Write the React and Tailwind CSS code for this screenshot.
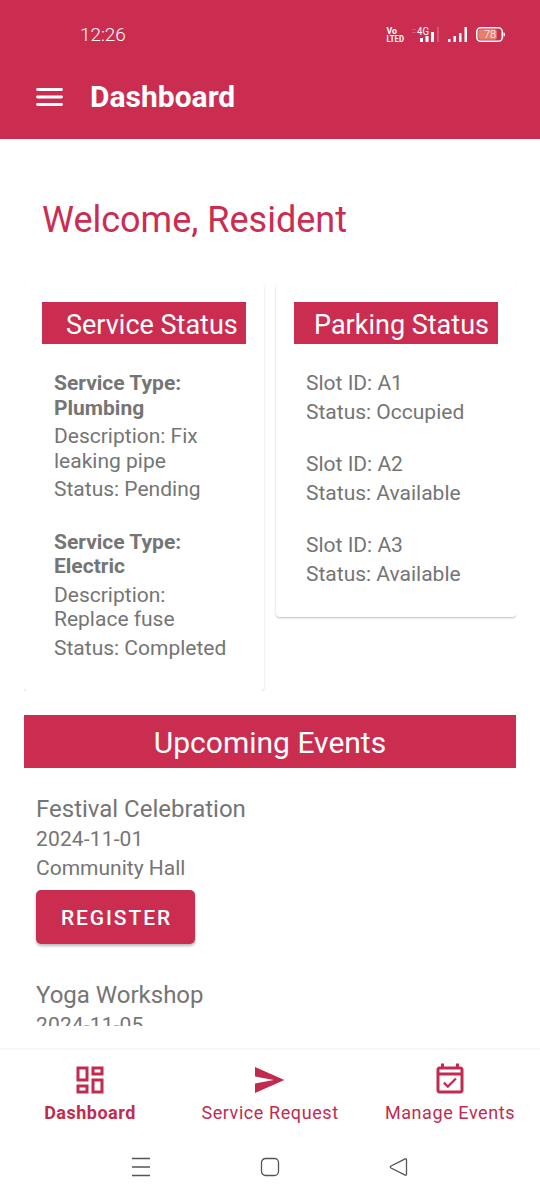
const services = [
  { type: ["Service Type:", "Plumbing"], description: ["Description: Fix", "leaking pipe"], status: "Pending" },
  { type: ["Service Type:", "Electric"], description: ["Description:", "Replace fuse"], status: "Completed" },
];

const slots = [
  { id: "A1", status: "Occupied" },
  { id: "A2", status: "Available" },
  { id: "A3", status: "Available" },
];

function Lines({ lines }) {
  return lines.map((line) => <span key={line} className="block">{line}</span>);
}

function StatusBar() {
  return (
    <div className="flex h-[55px] items-end justify-between pr-[33px] pl-[80px]">
      <span className="h-[34px] text-[19px] leading-[28px] font-light tracking-[-0.1px]">12:26</span>
      <svg width="122" height="30" viewBox="0 0 122 30" className="mb-[5px]" fill="white" fontFamily="Roboto, sans-serif">
        <g fontSize="9.5" fontWeight="700">
          <text x="1.500" y="14" textLength="10.500" lengthAdjust="spacingAndGlyphs">Vo</text>
          <text x="1.500" y="22" textLength="17.500" lengthAdjust="spacingAndGlyphs">LTED</text>
        </g>
        <path d="M27 9h4v1h-4zM27 12h4v1h-4zM52 7h2v15h-2z" opacity="0.2" />
        <text x="32" y="15" fontSize="10.5" textLength="12" lengthAdjust="spacingAndGlyphs">4G</text>
        <path d="M35 18h3v4h-3zM40.500 16h3v6h-3zM46 12h3v10h-3z" />
        <path d="M63 19h2.500v3H63zM68.500 16h2.500v6h-2.500zM74 13h2.500v9H74zM79.500 7h2.500v15h-2.500z" />
        <rect x="91.800" y="7.800" width="25.500" height="13.500" rx="4" fill="none" stroke="white" strokeWidth="1.600" />
        <rect x="93.300" y="9.300" width="18.500" height="10.500" rx="2" fill="#e58065" />
        <path d="M118.500 12.300c2 .5 2 4 0 4.500z" />
        <text x="99" y="18.200" fontSize="11" fontWeight="300">78</text>
      </svg>
    </div>
  );
}

function Card({ title, inset, className, children }) {
  return (
    <section className={"w-[240px] rounded-[4px] bg-white px-[18px] pt-[19px] " + className}>
      <h2 className={"h-[42px] w-[204px] bg-[#cb2d51] text-[27px] leading-[46px] whitespace-nowrap text-white " + inset}>{title}</h2>
      <div className="flex flex-col gap-[28px] pt-[27px] pl-[12px] text-[21px] leading-[24.5px]">{children}</div>
    </section>
  );
}

function EventItem({ title, date, place }) {
  return (
    <article className="flex flex-col text-[21px] leading-[25px]">
      <h3 className="text-[24px] leading-[28px]">{title}</h3>
      <p className="mt-[4px] tracking-[0.15px]">{date}</p>
      {place && (
        <>
          <p className="mt-[4px]">{place}</p>
          <button className="mt-[9px] h-[54px] w-[159px] rounded-[5px] bg-[#cb2d51] pt-[2px] pl-[2px] text-[21px] font-medium tracking-[1.9px] text-white shadow-[0_2px_3px_rgba(0,0,0,0.28)]">REGISTER</button>
        </>
      )}
    </article>
  );
}

function NavItem({ label, path, className }) {
  return (
    <div className={"flex w-[180px] flex-col items-center " + className}>
      <svg width="36" height="36" viewBox="0 0 24 24" fill="currentColor"><path d={path} /></svg>
      <span className="mt-[4px] text-[18px] leading-[22px] whitespace-nowrap">{label}</span>
    </div>
  );
}

export default function App() {
  return (
    <div className="flex h-[1200px] w-[540px] flex-col overflow-hidden bg-white font-['Roboto',sans-serif] text-[#757575]">
      <header className="h-[139px] bg-[#cb2d51] text-white">
        <StatusBar />
        <div className="flex h-[84px] items-center gap-[27px] pl-[36px]">
          <svg width="27" height="18" viewBox="0 0 27 18" stroke="white" strokeWidth="2.800" strokeLinecap="round"><path d="M1.500 1.500h24M1.500 9h24M1.500 16.500h24" /></svg>
          <h1 className="pb-[2px] text-[30px] leading-[35px] font-bold">Dashboard</h1>
        </div>
      </header>

      <main className="h-[887px] overflow-hidden px-[24px]">
        <p className="mt-[60px] pl-[18px] text-[36px] leading-[42px] text-[#cb2d51]">Welcome, Resident</p>

        <div className="mt-[42px] flex h-[408px] items-start gap-[12px] overflow-hidden">
          <Card title="Service Status" inset="pl-[24px]" className="h-[408px] shadow-[0_1px_2px_rgba(0,0,0,0.2)]">
            {services.map((s) => (
              <div key={s.status} className="flex flex-col gap-[4px]">
                <p className="font-bold"><Lines lines={s.type} /></p>
                <p><Lines lines={s.description} /></p>
                <p>Status: {s.status}</p>
              </div>
            ))}
          </Card>
          <Card title="Parking Status" inset="pl-[20px]" className="h-[334px] shadow-[0_1px_2px_rgba(0,0,0,0.25)]">
            {slots.map((s) => (
              <div key={s.id} className="flex flex-col gap-[4px]">
                <p>Slot ID: {s.id}</p>
                <p>Status: {s.status}</p>
              </div>
            ))}
          </Card>
        </div>

        <h2 className="mt-[24px] h-[53px] bg-[#cb2d51] text-center text-[30px] leading-[55px] text-white">Upcoming Events</h2>
        <div className="flex flex-col gap-[37px] pt-[27px] pl-[12px]">
          <EventItem title="Festival Celebration" date="2024-11-01" place="Community Hall" />
          <EventItem title="Yoga Workshop" date="2024-11-05" />
        </div>
      </main>

      <nav className="mt-[22px] flex h-[86px] border-t-2 border-[#f7f7f7] pt-[12px] text-[#c12b50]">
        <NavItem label="Dashboard" className="font-bold tracking-[0.5px]" path="M19 5v2h-4V5h4M9 5v6H5V5h4m10 8v6h-4v-6h4M9 17v2H5v-2h4M21 3h-8v6h8V3zM11 3H3v10h8V3zm10 8h-8v10h8V11zm-10 4H3v6h8v-6z" />
        <NavItem label="Service Request" className="tracking-[0.58px]" path="M2 20.700L21.600 12 2 3.300v6.300L14.500 12 2 14.400z" />
        <NavItem label="Manage Events" className="tracking-[0.58px]" path="M19 3h-1V1h-2v2H8V1H6v2H5c-1.110 0-2 .9-2 2v14c0 1.100.890 2 2 2h14c1.100 0 2-.9 2-2V5c0-1.100-.9-2-2-2zm0 16H5V9h14v10zM5 7V5h14v2H5zm5.560 10.460l5.930-5.930-1.060-1.060-4.870 4.870-2.110-2.110-1.060 1.060z" />
      </nav>

      <footer className="flex h-[66px] items-center justify-between px-[131px]">
        <svg width="20" height="20" viewBox="0 0 20 20" stroke="#555" strokeWidth="1.500"><path d="M1 1.500h18M1 10h18M1 18.500h18" /></svg>
        <svg width="20" height="20" viewBox="0 0 20 20" fill="none" stroke="#555" strokeWidth="1.300"><rect x="1.500" y="1.500" width="17" height="17" rx="4" /></svg>
        <svg width="20" height="20" viewBox="0 0 20 20" fill="none" stroke="#555" strokeWidth="1.300"><path d="M16.200 1.800L2 9q-1.500 1 0 2l14.200 7.200q1.300.4 1.300-1.200V3q0-1.600-1.300-1.200z" /></svg>
      </footer>
    </div>
  );
}
